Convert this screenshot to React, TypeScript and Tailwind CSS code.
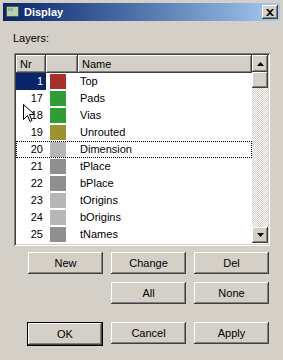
const layers = [
  { nr: 1, color: "#a8302c", name: "Top", selected: true },
  { nr: 17, color: "#2f9d34", name: "Pads" },
  { nr: 18, color: "#2f9d34", name: "Vias" },
  { nr: 19, color: "#9b9230", name: "Unrouted" },
  { nr: 20, color: "#b6b6b6", name: "Dimension", focus: true },
  { nr: 21, color: "#8f8f8f", name: "tPlace" },
  { nr: 22, color: "#8f8f8f", name: "bPlace" },
  { nr: 23, color: "#b6b6b6", name: "tOrigins" },
  { nr: 24, color: "#b6b6b6", name: "bOrigins" },
  { nr: 25, color: "#8f8f8f", name: "tNames" },
];

const raised =
  "shadow-[inset_-1px_-1px_0_#404040,inset_1px_1px_0_#ffffff,inset_-2px_-2px_0_#808080]";

const Button = ({ label, isDefault }: { label: string; isDefault?: boolean }) => {
  return (
    <button
      className={`flex items-center justify-center bg-[#d4d0c8] text-[11px] text-black ${
        isDefault
          ? "h-[24px] shadow-[inset_0_0_0_1px_#000000,inset_-2px_-2px_0_#404040,inset_2px_2px_0_#ffffff,inset_-3px_-3px_0_#808080]"
          : `h-[22px] ${raised}`
      }`}
    >
      {label}
    </button>
  );
};

const Arrow = ({ up }: { up?: boolean }) => (
  <svg width="7" height="4" viewBox="0 0 7 4">
    <path d={up ? "M3.5 0 L7 4 L0 4 Z" : "M0 0 L7 0 L3.5 4 Z"} fill="#000" />
  </svg>
);

export default function App() {
  return (
    <div className="relative flex h-[360px] w-[283px] flex-col bg-[#d4d0c8] font-['Liberation_Sans',Arial,sans-serif] text-[11px] text-black">
      {/* title bar */}
      <div className="mx-[3px] mt-[3px] flex h-[18px] items-center bg-linear-to-r from-[#0a246a] to-[#a6caf0] pl-[2px] pr-[2px]">
        <svg width="16" height="16" viewBox="0 0 16 16">
          <rect x="1" y="2" width="13" height="11" fill="#4a5a4a" />
          <rect x="2" y="3" width="11" height="9" fill="#b8d0b0" />
          <rect x="3" y="4" width="5" height="3" fill="#8ab88a" />
        </svg>
        <span className="ml-[3px] text-[11px] font-bold text-white">Display</span>
        <div
          className={`ml-auto flex h-[14px] w-[16px] items-center justify-center bg-[#d4d0c8] ${raised}`}
        >
          <svg width="8" height="7" viewBox="0 0 8 7">
            <path d="M0 0 L2 0 L4 2 L6 0 L8 0 L5 3.5 L8 7 L6 7 L4 5 L2 7 L0 7 L3 3.5 Z" fill="#000" />
          </svg>
        </div>
      </div>

      <div className="flex flex-col pl-[13px]">
        <div className="mt-[11px] h-[13px] leading-[13px]">Layers:</div>

        {/* list */}
        <div className="ml-[1px] mt-[8px] w-[256px] p-[2px] pb-[3px] shadow-[inset_1px_1px_0_#808080,inset_-1px_-1px_0_#ffffff,inset_2px_2px_0_#404040,inset_-2px_-2px_0_#d4d0c8] bg-white">
          <div className="flex">
            <div className="w-[236px]">
              <div className="flex h-[18px]">
                <div className={`flex w-[30px] items-center bg-[#d4d0c8] pl-[4px] ${raised}`}>Nr</div>
                <div className={`w-[32px] bg-[#d4d0c8] ${raised}`} />
                <div className={`flex flex-1 items-center bg-[#d4d0c8] pl-[4px] ${raised}`}>Name</div>
              </div>
              {layers.map((l) => (
                <div
                  key={l.nr}
                  className={`flex h-[17px] items-center ${
                    l.focus ? "border border-dotted border-black" : ""
                  }`}
                >
                  <div
                    className={`flex h-full items-center justify-end pr-[3px] ${
                      l.focus ? "w-[29px]" : "w-[30px]"
                    } ${l.selected ? "bg-[#0a246a] text-white" : ""}`}
                  >
                    {l.nr}
                  </div>
                  <div className="flex h-full w-[32px] items-center pl-[4px]">
                    <div className="h-[15px] w-[16px]" style={{ backgroundColor: l.color }} />
                  </div>
                  <div className="pl-[2px]">{l.name}</div>
                </div>
              ))}
            </div>

            {/* scrollbar */}
            <div className="flex w-[16px] flex-col">
              <div className={`flex h-[17px] items-center justify-center bg-[#d4d0c8] ${raised}`}>
                <Arrow up />
              </div>
              <div className={`h-[16px] bg-[#d4d0c8] ${raised}`} />
              <div className="flex-1 bg-[image:repeating-conic-gradient(#d4d0c8_0_25%,#ffffff_0_50%)] bg-[length:2px_2px]" />
              <div className={`flex h-[16px] items-center justify-center bg-[#d4d0c8] ${raised}`}>
                <Arrow />
              </div>
            </div>
          </div>
        </div>

        {/* buttons */}
        <div className="ml-[15px] mt-[6px] grid grid-cols-[75px_75px_75px] gap-x-[8px] gap-y-[8px]">
          <Button label="New" />
          <Button label="Change" />
          <Button label="Del" />
          <div />
          <Button label="All" />
          <Button label="None" />
        </div>
        <div className="ml-[14px] mt-[18px] grid grid-cols-[76px_75px_75px] items-start gap-x-[8px]">
          <Button label="OK" isDefault />
          <Button label="Cancel" />
          <Button label="Apply" />
        </div>
      </div>

      {/* mouse cursor */}
      <svg className="absolute left-[23px] top-[104px]" width="12" height="19" viewBox="0 0 12 19">
        <path
          d="M0.5 0.5 L0.5 15.5 L4.5 11.5 L7 17.5 L9 16.5 L6.5 10.5 L11.5 10.5 Z"
          fill="#ffffff"
          stroke="#000000"
          strokeWidth="1"
        />
      </svg>
    </div>
  );
}
